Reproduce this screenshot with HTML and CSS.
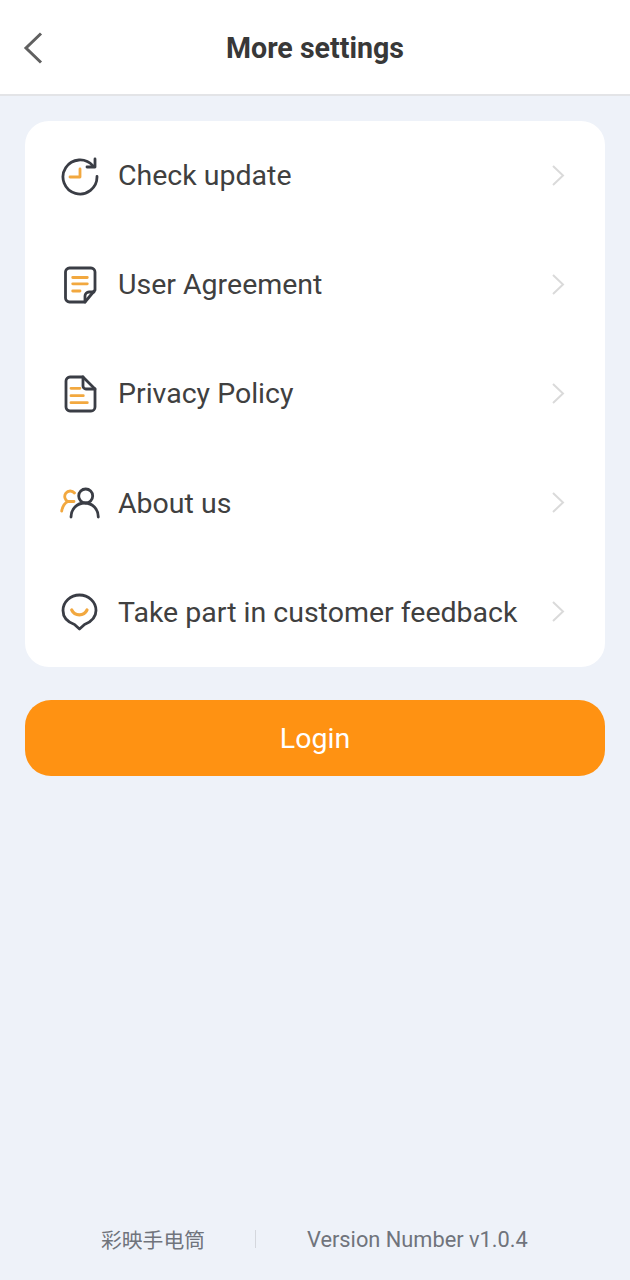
FILE: index.html
```html
<!DOCTYPE html>
<html lang="en">
<head>
  <meta charset="UTF-8">
  <meta name="viewport" content="width=device-width, initial-scale=1.0">
  <title>More settings</title>
  <link rel="stylesheet" href="styles.css">
</head>
<body>
  <div class="page">
    <header class="topbar">
      <svg class="back" width="20" height="32" viewBox="0 0 20 32"><path d="M18 1.500 L3 16 L18 30.500" /></svg>
      <h1>More settings</h1>
    </header>

    <main class="content">
      <ul class="menu">
        <li class="row">
          <svg class="icon" width="40" height="40" viewBox="0 0 40 40">
            <path class="dark" d="M33 10 A17 17 0 1 0 37 20.500" />
            <path class="dark" d="M35 3 V11 H27" />
            <path class="accent" d="M10 21 H20 V13" />
          </svg>
          <span class="label">Check update</span>
          <svg class="chevron" width="14" height="22" viewBox="0 0 14 22"><path d="M2 1 L12 10.500 L2 20" /></svg>
        </li>
        <li class="row">
          <svg class="icon" width="40" height="40" viewBox="0 0 40 40">
            <path class="dark" d="M9.500 3 H31 A4 4 0 0 1 35 7 V25 L25 37 H9.500 A4 4 0 0 1 5.500 33 V7 A4 4 0 0 1 9.500 3 Z" />
            <path class="dark" d="M25 37 V31 A4 4 0 0 1 29 27 H34" />
            <path class="accent" d="M12.700 12.500 H27.300 M12.700 18.800 H27.300 M12.700 26 H20" />
          </svg>
          <span class="label">User Agreement</span>
          <svg class="chevron" width="14" height="22" viewBox="0 0 14 22"><path d="M2 1 L12 10.500 L2 20" /></svg>
        </li>
        <li class="row">
          <svg class="icon" width="40" height="40" viewBox="0 0 40 40">
            <path class="dark" d="M10 3 H23 L35 15 V33 A4 4 0 0 1 31 37 H10 A4 4 0 0 1 6 33 V7 A4 4 0 0 1 10 3 Z" />
            <path class="dark" d="M23 3 V12 A3 3 0 0 0 26 15 H35" />
            <path class="accent" d="M11 14.300 H20 M11 21.700 H23.300 M11 28.700 H27.300" />
          </svg>
          <span class="label">Privacy Policy</span>
          <svg class="chevron" width="14" height="22" viewBox="0 0 14 22"><path d="M2 1 L12 10.500 L2 20" /></svg>
        </li>
        <li class="row">
          <svg class="icon" width="40" height="40" viewBox="0 0 40 40">
            <path class="accent" d="M1.700 28 C2.500 23.500 4.500 20 8 18.500 A5.500 5.500 0 1 1 14.500 10 M8 18.500 H14" />
            <circle class="dark" cx="25.700" cy="13" r="7" />
            <path class="dark" d="M11 34 C11 26 17 20 24.700 20 C32.500 20 38.300 26 38.300 34" />
          </svg>
          <span class="label">About us</span>
          <svg class="chevron" width="14" height="22" viewBox="0 0 14 22"><path d="M2 1 L12 10.500 L2 20" /></svg>
        </li>
        <li class="row">
          <svg class="icon" width="40" height="40" viewBox="0 0 40 40">
            <path class="dark" d="M19.500 3 C28.500 3 36 10 36 18.500 C36 26.500 29.500 30.500 24.500 32.500 L19.500 37 L14.500 32.500 C9 30.500 3 26.500 3 18.500 C3 10 10.500 3 19.500 3 Z" />
            <path class="smile" d="M11.700 18 A8.500 8.500 0 0 0 27 18" />
          </svg>
          <span class="label">Take part in customer feedback</span>
          <svg class="chevron" width="14" height="22" viewBox="0 0 14 22"><path d="M2 1 L12 10.500 L2 20" /></svg>
        </li>
      </ul>

      <button class="login">Login</button>
    </main>

    <footer class="foot">
      <span class="app-name">彩映手电筒</span>
      <span class="divider"></span>
      <span class="version">Version Number v1.0.4</span>
    </footer>
  </div>
</body>
</html>
```

FILE: styles.css
```css
* {
  box-sizing: border-box;
}
body {
  margin: 0;
  font-family: Roboto, "Noto Sans CJK SC", sans-serif;
  background-color: #eef2f9;
  color: #333;
}
.page {
  height: 1280px;
  display: flex;
  flex-direction: column;
}
.topbar {
  height: 96px;
  padding-top: 2px;
  background-color: #fff;
  border-bottom: 2px solid #e3e4e7;
  display: flex;
  align-items: center;
  justify-content: center;
  position: relative;
}
.topbar h1 {
  margin: 0;
  font-size: 28.600px;
  font-weight: 700;
  color: #383838;
}
.back {
  position: absolute;
  left: 23px;
  top: 32px;
}
.back path {
  fill: none;
  stroke: #606060;
  stroke-width: 3;
}
.content {
  flex: 1;
  padding: 25px 25px 0;
}
.menu {
  list-style: none;
  margin: 0;
  padding: 0;
  background-color: #fff;
  border-radius: 24px;
  height: 546px;
  display: flex;
  flex-direction: column;
}
.row {
  height: 109.200px;
  display: flex;
  align-items: center;
  padding: 0 40px 0 35px;
}
.icon {
  flex: none;
  margin-right: 18px;
}
.icon path, .icon circle {
  fill: none;
  stroke-width: 2.800;
  stroke-linecap: round;
  stroke-linejoin: round;
}
.icon .dark {
  stroke: #3a3d45;
}
.icon .accent {
  stroke: #f2a83f;
}
.icon .smile {
  stroke: #f2a83f;
  stroke-width: 3.200;
}
.label {
  flex: 1;
  font-size: 28.500px;
  color: #404040;
  white-space: nowrap;
}
.chevron path {
  fill: none;
  stroke: #dadada;
  stroke-width: 2;
}
.login {
  display: block;
  width: 100%;
  height: 76px;
  margin-top: 33px;
  padding: 0;
  border: none;
  border-radius: 26px;
  background-color: #ff9212;
  color: #fff;
  font-family: inherit;
  font-size: 28.500px;
}
.foot {
  height: 82px;
  display: flex;
  align-items: center;
  color: #70747c;
  font-size: 20.800px;
}
.app-name {
  margin-left: 101px;
  width: 154px;
}
.divider {
  width: 1px;
  height: 18px;
  background-color: #d4d7dd;
}
.version {
  margin-left: 51px;
  font-size: 21.800px;
}
```
